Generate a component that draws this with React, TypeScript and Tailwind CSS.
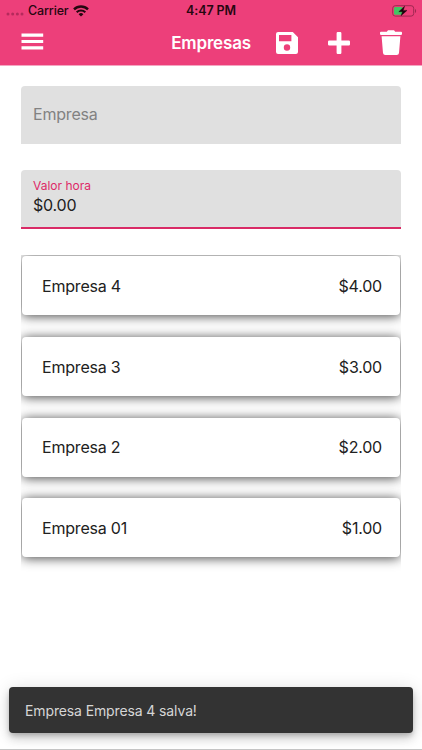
import type { ReactNode } from "react";

interface Company {
	id: number;
	name: string;
	rate: string;
}

const companies: Company[] = [
	{ id: 4, name: "Empresa 4", rate: "$4.00" },
	{ id: 3, name: "Empresa 3", rate: "$3.00" },
	{ id: 2, name: "Empresa 2", rate: "$2.00" },
	{ id: 1, name: "Empresa 01", rate: "$1.00" },
];

function StatusBar() {
	return (
		<div className="grid h-5 grid-cols-3 items-center text-[12.5px] leading-5 text-[#260710]">
			<div className="flex items-center pl-[6px]">
				<svg width="18" height="4" viewBox="0 0 18 4" className="mt-[7px] fill-[#b52a5c]">
					<circle cx="2" cy="2" r="1.5" />
					<circle cx="6.7" cy="2" r="1.5" />
					<circle cx="11.4" cy="2" r="1.5" />
					<circle cx="16" cy="2" r="1.5" />
				</svg>
				<span className="ml-1 mt-px font-medium tracking-[-0.15px]">Carrier</span>
				<svg width="16" height="12" viewBox="0 0 16 12" className="ml-1 mt-px" fill="none" stroke="currentColor">
					<path d="M1 4.3a10 10 0 0 1 14 0" strokeWidth="2.4" />
					<path d="M3.7 7.2a6.1 6.1 0 0 1 8.6 0" strokeWidth="2.1" />
					<path d="M5.6 9.2a3.4 3.4 0 0 1 4.8 0L8 11.6z" fill="currentColor" stroke="none" />
				</svg>
			</div>
			<span className="mt-px text-center font-semibold tracking-[-0.12px]">4:47 PM</span>
			<div className="flex justify-end pr-[5px]">
				<svg width="25" height="12" viewBox="0 0 25 12">
					<rect x="0.7" y="0.7" width="21" height="10.4" rx="2.6" fill="none" stroke="#9f2851" strokeWidth="1" />
					<rect x="2" y="2" width="8.5" height="7.8" rx="1.3" fill="#43c463" />
					<path d="M23 4v4c1.5-.5 1.5-3.500 0-4z" fill="#9f2851" />
					<path d="M12.600 1.200 6.800 6.700h3.700L9 10.800l6-5.400h-3.800z" fill="#180309" stroke="#180309" strokeWidth="0.4" />
				</svg>
			</div>
		</div>
	);
}

function IconButton({ label, className, children }: { label: string; className?: string; children: ReactNode }) {
	return (
		<button type="button" aria-label={label} className={className}>
			{children}
		</button>
	);
}

function Toolbar() {
	return (
		<div className="flex h-[45px] items-center pl-[21px] pr-5 text-white">
			<IconButton label="Menu" className="-mt-[3px]">
				<svg width="23" height="17" viewBox="0 0 23 17" fill="currentColor">
					<path d="M.5.600h21.700v3.200H.5zM.5 6.900h21.700v3.200H.5zM.5 13.200h21.700v3.200H.5z" />
				</svg>
			</IconButton>
			<h1 className="ml-auto mt-px text-[17px] font-semibold leading-5 tracking-[-0.15px]">Empresas</h1>
			<IconButton label="Salvar" className="ml-[25px]">
				<svg width="22" height="22" viewBox="0 0 22 22" fill="currentColor">
					<path
						fillRule="evenodd"
						d="M2.500 0h14.300L22 5.200v14.300a2.400 2.400 0 0 1-2.500 2.500h-17A2.400 2.400 0 0 1 0 19.500v-17A2.400 2.400 0 0 1 2.500 0zM3 3v6.200h12.400V3zM11 12.300a3.200 3.200 0 1 0 0 6.400 3.200 3.200 0 0 0 0-6.400z"
					/>
				</svg>
			</IconButton>
			<IconButton label="Adicionar" className="ml-[30px]">
				<svg width="22" height="22" viewBox="0 0 22 22" fill="currentColor">
					<path d="M9.800 0h2.400a1.200 1.200 0 0 1 1.200 1.200v7.400h7.400A1.200 1.200 0 0 1 22 9.800v2.400a1.200 1.200 0 0 1-1.200 1.200h-7.400v7.400a1.200 1.200 0 0 1-1.200 1.200H9.800a1.200 1.200 0 0 1-1.200-1.200v-7.400H1.200A1.200 1.200 0 0 1 0 12.200V9.800a1.200 1.200 0 0 1 1.200-1.200h7.400V1.200A1.200 1.200 0 0 1 9.800 0z" />
				</svg>
			</IconButton>
			<IconButton label="Excluir" className="ml-[30px]">
				<svg width="22" height="26" viewBox="0 0 22 26" fill="currentColor">
					<path d="M1 1.800h5.800L8 .3h6l1.200 1.500H21a1 1 0 0 1 1 1v1.300a.8.8 0 0 1-.8.8H.8a.8.8 0 0 1-.8-.8V2.800a1 1 0 0 1 1-1z" />
					<path d="M1.600 6.300h18.800l-1.400 16.800a2.300 2.300 0 0 1-2.300 2H5.300a2.300 2.300 0 0 1-2.300-2z" />
				</svg>
			</IconButton>
		</div>
	);
}

function CompanyRow({ company }: { company: Company }) {
	return (
		<li className="flex h-[59px] items-center justify-between rounded-[4px] bg-white pl-5 pr-[18px] pt-[0.75px] text-[16px] tracking-[-0.2px] text-[#212121] shadow-[0_1px_12px_rgba(0,0,0,0.75)]">
			<span>{company.name}</span>
			<span>{company.rate}</span>
		</li>
	);
}

export default function App() {
	return (
		<div className="flex h-[750px] w-[422px] flex-col overflow-hidden bg-white font-['Inter','Roboto',sans-serif]">
			<header className="h-[66px] shrink-0 border-b border-[#f4a6c1] bg-[#ed3f7a]">
				<StatusBar />
				<Toolbar />
			</header>

			<main className="flex flex-1 flex-col px-[21px] pt-5">
				<div className="flex h-[58px] items-center rounded-t-[4px] bg-[#e0e0e0] px-3 pb-0.5 text-[16px] tracking-[-0.2px] text-[#828282]">
					Empresa
				</div>

				<div className="mt-[26px] flex h-[59px] flex-col rounded-t-[4px] border-b-2 border-[#d92b66] bg-[#e0e0e0] px-3 pt-2">
					<span className="text-[12px] leading-4 text-[#de2a68]">Valor hora</span>
					<span className="text-[16px] leading-[22px] tracking-[-0.2px] text-[#212121]">$0.00</span>
				</div>

				<ul className="mt-[26px] flex h-[318px] flex-col gap-[21.75px] overflow-hidden px-px pt-px">
					{companies.map((company) => (
						<CompanyRow key={company.id} company={company} />
					))}
				</ul>

				<div
					role="status"
					className="-mx-3 mb-4 mt-auto flex h-[46px] items-center rounded-[4px] bg-[#333333] px-4 text-[14px] tracking-[-0.12px] text-[#d6d6d6] shadow-[0_3px_5px_-1px_rgba(0,0,0,0.2),0_6px_10px_rgba(0,0,0,0.14),0_1px_18px_rgba(0,0,0,0.12)]">
					Empresa Empresa 4 salva!
				</div>
			</main>
			<div className="h-px shrink-0 bg-[#c4c4c4]" />
		</div>
	);
}
